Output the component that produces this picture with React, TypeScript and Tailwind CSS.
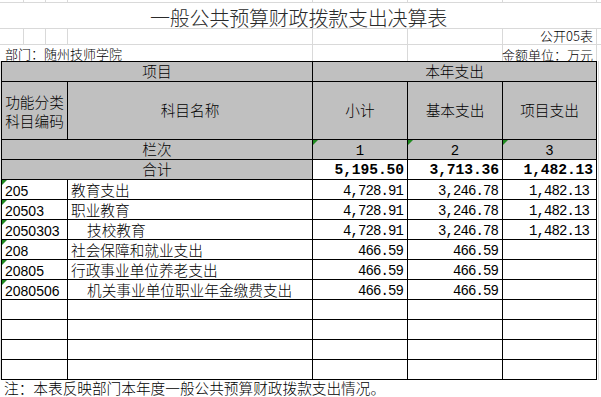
import React from "react";

const CJK = "font-['Noto_Sans_CJK_SC',sans-serif]";
const MONO = "font-['Liberation_Mono',monospace]";
const SANS = "font-['Liberation_Sans',sans-serif]";

function Tri() {
  return (
    <span className="absolute left-0 top-0 w-0 h-0 border-t-[5px] border-t-[#1f8a1f] border-r-[5px] border-r-transparent" />
  );
}

type Row = { code: string; name: string; indent?: boolean; a: string; b: string; c: string };

const rows: Row[] = [
  { code: "205", name: "教育支出", a: "4,728.91", b: "3,246.78", c: "1,482.13" },
  { code: "20503", name: "职业教育", a: "4,728.91", b: "3,246.78", c: "1,482.13" },
  { code: "2050303", name: "技校教育", indent: true, a: "4,728.91", b: "3,246.78", c: "1,482.13" },
  { code: "208", name: "社会保障和就业支出", a: "466.59", b: "466.59", c: "" },
  { code: "20805", name: "行政事业单位养老支出", a: "466.59", b: "466.59", c: "" },
  { code: "2080506", name: "机关事业单位职业年金缴费支出", indent: true, a: "466.59", b: "466.59", c: "" },
];

const cell = "border-r border-b border-black flex items-center";
const gray = "bg-[#c0c0c0]";
const numCell = `${cell} justify-end pr-[4px] ${MONO} text-[14px] tracking-[-0.9px] text-black`;

export default function App() {
  return (
    <div className={`w-[601px] h-[397px] bg-white overflow-hidden text-black ${CJK}`}>
      {/* top area with excel gridlines */}
      <div className="flex flex-col">
        {/* row 0 */}
        <div className="flex h-[3px] border-b border-[#d9d9d9]">
          <div className="w-[24px] border-r border-[#d9d9d9]" />
          <div className="w-[22px] border-r border-[#d9d9d9]" />
          <div className="w-[22px] border-r border-[#d9d9d9]" />
          <div className="w-[245px] border-r border-[#d9d9d9]" />
          <div className="w-[95px] border-r border-[#d9d9d9]" />
          <div className="w-[95px] border-r border-[#d9d9d9]" />
          <div className="w-[94px] border-r border-[#d9d9d9]" />
        </div>
        {/* title row */}
        <div className="flex h-[26px] border-b border-[#d9d9d9]">
          <div className="w-[597px] flex items-center justify-center pt-[4px]">
            <span className="text-[20px] leading-none font-light text-[#2a2a2a] tracking-[-0.2px]">
              一般公共预算财政拨款支出决算表
            </span>
          </div>
        </div>
        {/* 公开05表 row */}
        <div className="flex h-[16px] border-b border-[#d9d9d9] text-[13px] leading-[13px]">
          <div className="w-[24px] border-r border-[#d9d9d9]" />
          <div className="w-[22px] border-r border-[#d9d9d9]" />
          <div className="w-[22px] border-r border-[#d9d9d9]" />
          <div className="w-[245px] border-r border-[#d9d9d9]" />
          <div className="w-[95px] border-r border-[#d9d9d9]" />
          <div className="w-[95px] border-r border-[#d9d9d9]" />
          <div className="w-[94px] border-r border-[#d9d9d9] flex items-center justify-end pr-[3px] pb-[2px] font-light whitespace-nowrap">
            公开05表
          </div>
        </div>
        {/* 部门 row */}
        <div className="flex h-[16px] text-[13px] leading-[13px]">
          <div className="w-[313px] border-r border-[#d9d9d9] flex items-center pl-[5px] pt-[1px] font-light whitespace-nowrap">
            部门：随州技师学院
          </div>
          <div className="w-[95px] border-r border-[#d9d9d9]" />
          <div className="w-[95px] border-r border-[#d9d9d9]" />
          <div className="w-[94px] border-r border-[#d9d9d9] flex items-center justify-end pr-[3px] pt-[2px] font-light whitespace-nowrap">
            金额单位：万元
          </div>
        </div>
      </div>

      {/* table */}
      <div className="flex">
        <div className="w-px bg-[#e4e4e4]" />
        <div className="grid grid-cols-[66px_245px_95px_95px_94px] grid-rows-[20px_58px_20px_20px_repeat(10,20px)] border-l border-t border-black text-[14.67px] leading-none font-light">
          <div className={`${cell} ${gray} col-span-2 justify-center`}>项目</div>
          <div className={`${cell} ${gray} col-span-3 justify-center`}>本年支出</div>

          <div className={`${cell} ${gray} justify-center text-center leading-[19px]`}>
            功能分类
            <br />
            科目编码
          </div>
          <div className={`${cell} ${gray} justify-center`}>科目名称</div>
          <div className={`${cell} ${gray} justify-center`}>小计</div>
          <div className={`${cell} ${gray} justify-center`}>基本支出</div>
          <div className={`${cell} ${gray} justify-center`}>项目支出</div>

          <div className={`${cell} ${gray} col-span-2 justify-center`}>栏次</div>
          {["1", "2", "3"].map((n) => (
            <div key={n} className={`${cell} ${gray} justify-center relative ${MONO} text-[14px] pt-[2px]`}>
              <Tri />
              {n}
            </div>
          ))}

          <div className={`${cell} ${gray} col-span-2 justify-center`}>合计</div>
          {["5,195.50", "3,713.36", "1,482.13"].map((n) => (
            <div
              key={n}
              className={`${cell} justify-end pr-[3px] ${MONO} text-[14.67px] font-bold tracking-[-0.1px] pt-[2px]`}
            >
              {n}
            </div>
          ))}

          {rows.map((r) => (
            <React.Fragment key={r.code}>
              <div className={`${cell} relative pl-[3px] ${SANS} text-[14px] pt-[2px] font-normal`}>
                <Tri />
                {r.code}
              </div>
              <div className={`${cell} pt-[1px] whitespace-nowrap ${r.indent ? "pl-[19px]" : "pl-[3px]"}`}>{r.name}</div>
              <div className={`${numCell} pt-[2px]`}>{r.a}</div>
              <div className={`${numCell} pt-[2px]`}>{r.b}</div>
              <div className={`${numCell} pt-[2px] pr-[7px]`}>{r.c}</div>
            </React.Fragment>
          ))}

          {[0, 1, 2, 3].map((i) => (
            <React.Fragment key={i}>
              <div className={cell} />
              <div className={cell} />
              <div className={cell} />
              <div className={cell} />
              <div className={cell} />
            </React.Fragment>
          ))}
        </div>
        <div className="w-px ml-px bg-[#d9d9d9]" />
      </div>

      {/* note */}
      <div className="flex h-[17px] items-start pt-[1px] pl-[4px] text-[14.67px] leading-none font-light whitespace-nowrap">
        注：本表反映部门本年度一般公共预算财政拨款支出情况。
      </div>
    </div>
  );
}
